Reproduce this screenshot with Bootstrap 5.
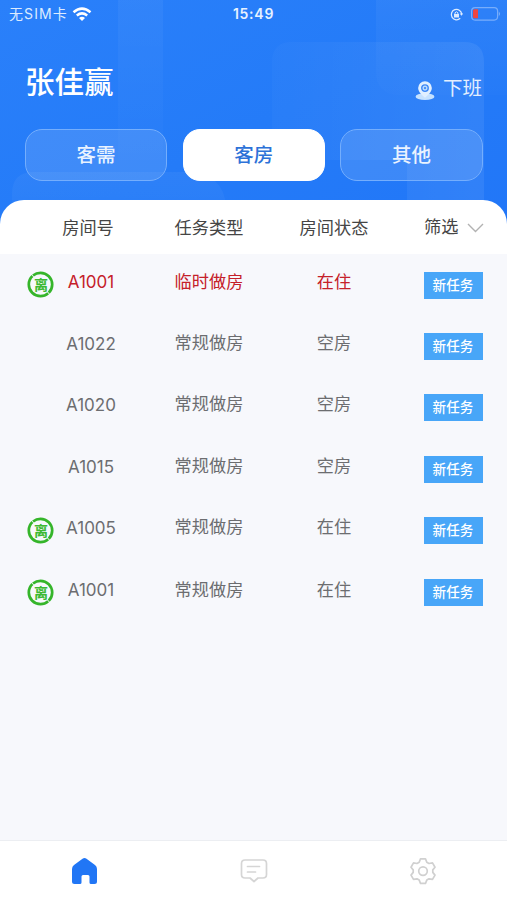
<!DOCTYPE html>
<html lang="zh-CN">
<head>
<meta charset="utf-8">
<meta name="viewport" content="width=device-width, initial-scale=1">
<title>客房任务</title>
<link href="https://cdn.jsdelivr.net/npm/bootstrap@5.3.0/dist/css/bootstrap.min.css" rel="stylesheet">
<style>
body{font-family:"Liberation Sans","Noto Sans CJK SC",sans-serif;background:#f7f8fc;height:900px;overflow:hidden}
.hero{height:254px;background:#257af7;flex:none}
.hero-bg{inset:0}
.status-bar{height:28px;padding:0 6px 0 9px;font-size:14px;line-height:28px;color:#dcebff;grid-template-columns:1fr auto 1fr}
.clock{font-family:Inter,"Liberation Sans",sans-serif;font-weight:600;font-size:14px;letter-spacing:.75px;color:#e6f1ff;margin-left:-3px}
.sim{font-family:Inter,"Noto Sans CJK SC",sans-serif;font-size:14px;letter-spacing:1.1px}
.title-row{height:101px;padding:0 25px}
.user{font-size:29.5px;font-weight:500;line-height:40px;margin-top:35px}
.off{font-size:19.5px;line-height:28px;color:#e4efff;margin-top:46px}
.tabs{padding:0 24.5px 0 25px;gap:15.5px;height:52px}
.tab-btn{border:1px solid #74aefd;border-radius:17px;background:rgba(255,255,255,.12);color:#eaf3ff;font-size:19.5px;font-weight:500;padding:0;line-height:51px;height:52px}
.tab-btn.on{background:#fff;border-color:#fff;color:#2d72d8}
.task-grid{display:grid;grid-template-columns:27px 27px 74px 162px 88px 45.5px 59px}
.sheet-head{margin-top:19px;height:54px;background:#fff;border-radius:24px 24px 0 0;color:#454545;font-size:17.2px;line-height:57px}
.h-room{grid-column:3;margin-left:-6px}
.h-type{grid-column:4}.h-state{grid-column:5;white-space:nowrap}
.h-filter{grid-column:6/8;padding-left:46px;height:55px;white-space:nowrap}
.chevron{margin-left:9px;flex:none}
.task{height:61.4px;color:#6c6d70;font-size:17.2px;line-height:24px;padding-top:17px}
.task.urgent{color:#c5202a}
.leave{grid-column:2;margin-left:-.5px}
.num{grid-column:3;font-family:Inter,"Liberation Sans",sans-serif;font-size:17px;margin-top:-.6px}
.kind{grid-column:4;margin-top:-1.3px}
.state{grid-column:5;margin-top:-1.3px}
.tag{grid-column:7;background:#48a6f8;height:27px;line-height:28px;font-size:13.5px;font-weight:500;margin-top:.5px;letter-spacing:.2px}
.task:last-child{padding-top:18px}
.bottom-bar{height:60px;border-top:1px solid #eceef2;background:#fff}
</style>
<script src="https://cdn.jsdelivr.net/npm/bootstrap@5.3.0/dist/js/bootstrap.bundle.min.js"></script>
</head>
<body class="d-flex flex-column">
<svg class="d-none"><symbol id="leave" viewBox="0 0 27 27"><circle cx="13.5" cy="13.5" r="11.7" fill="none" stroke="#35b52a" stroke-width="2.7" stroke-dasharray="35.96 .8" stroke-dashoffset="26.8"/><text x="14" y="18.700" text-anchor="middle" font-family="Noto Sans CJK SC" font-weight="700" font-size="14" fill="#3cb932">离</text></symbol></svg>
<header class="hero position-relative">
  <svg class="hero-bg position-absolute" width="507" height="254" viewBox="0 0 507 254">
    <defs>
      <linearGradient id="g" x2="1" y2="1"><stop stop-color="#2a80fa"/><stop offset=".5" stop-color="#247bf8"/><stop offset="1" stop-color="#2176f8"/></linearGradient>
      <linearGradient id="v" x2="1" y2="0"><stop stop-color="#fff" stop-opacity=".02"/><stop offset="1" stop-color="#fff" stop-opacity=".07"/></linearGradient>
      <linearGradient id="f" x2="0" y2="1"><stop stop-color="#fff" stop-opacity=".045"/><stop offset="1" stop-color="#fff" stop-opacity=".01"/></linearGradient>
    </defs>
    <path fill="url(#g)" d="M0 0h507v254H0z"/>
    <path fill="url(#f)" d="M118 0h45v160h-45z"/>
    <path fill="url(#f)" d="M376 0h131v95H400q-24 0-24-24z"/>
    <path fill="url(#v)" d="M272 62q0-20 20-20h172q20 0 20 20v192h-77V160h-135z"/>
    <path fill="url(#f)" d="M12 254v-60q0-22 22-22h150q40 0 42 35v47z"/>
  </svg>
  <div class="position-relative">
    <div class="status-bar d-grid align-items-center">
      <div class="d-flex align-items-center"><span class="sim">无SIM卡</span>
        <svg class="ms-1" width="20" height="15" viewBox="0 0 20 15" fill="none" stroke="#fff" stroke-width="2.5"><path d="M1.5 5.2Q10-2 18.5 5.2M4.8 8.500q5.200-4.200 10.400 0"/><path d="M10 14l-3-3q3-2.300 6 0z" fill="#fff" stroke="none"/></svg></div>
      <span class="clock">15:49</span>
      <div class="d-flex align-items-center justify-content-end gap-2">
        <svg width="13" height="13" viewBox="0 0 13 13" fill="none" stroke="#dcebff" stroke-width="1.3"><path d="M10.2 10.3A5.2 5.2 0 1 1 11.700 6"/><path d="M9.700 5.500h3.500l-1.700 2.300z" fill="#dcebff" stroke="none"/><path d="M4 6h5v3.500H4z" fill="#dcebff" stroke="none"/><path d="M5 6V4.800q1.400-2 2.900 0V6" stroke-width="1"/></svg>
        <svg width="30" height="14" viewBox="0 0 30 14"><rect x=".6" y=".6" width="26" height="12.500" rx="3.500" fill="none" stroke="#78adfb" stroke-width="1.200"/><path d="M3.500 2.300h3.500v9H3.500q-1.500 0-1.500-1.500v-6q0-1.500 1.500-1.500z" fill="#ee4540"/><path d="M27.800 4.500q2.500 2.300 0 4.600z" fill="#78adfb"/></svg>
      </div>
    </div>
    <div class="title-row d-flex justify-content-between align-items-start">
      <div class="user text-white">张佳赢</div>
      <div class="off d-flex align-items-center">
        <svg class="me-2 mt-1" width="20" height="21" viewBox="0 0 21 21"><ellipse cx="10.500" cy="17" rx="9.900" ry="3.600" fill="#c6e2ff"/><path d="M10.500 18C8.500 16.500 3.300 12.500 3.300 8a7.200 7.200 0 0 1 14.400 0c0 4.500-5.200 8.500-7.200 10z" fill="#e0efff"/><circle cx="10.500" cy="8" r="3.400" fill="#b9dcff" stroke="#3d88f7" stroke-width="1.500"/><circle cx="10.500" cy="8" r="1.200" fill="#3d88f7"/></svg>下班</div>
    </div>
    <div class="tabs d-flex">
      <button class="btn tab-btn flex-fill">客需</button><button class="btn tab-btn on flex-fill">客房</button><button class="btn tab-btn flex-fill">其他</button>
    </div>
    <div class="sheet-head task-grid text-center">
      <span class="h-room">房间号</span><span class="h-type">任务类型</span><span class="h-state">房间状态</span>
      <span class="h-filter d-flex align-items-center">筛选<svg class="chevron" width="17" height="10" viewBox="0 0 17 10" fill="none" stroke="#b2b2b2" stroke-width="1.400"><path d="M1 1l7.500 7.500L16 1"/></svg></span>
    </div>
  </div>
</header>
<main class="flex-grow-1 text-center">
  <div class="task task-grid urgent"><svg class="leave" width="27" height="27"><use href="#leave"/></svg><span class="num">A1001</span><span class="kind">临时做房</span><span class="state">在住</span><span class="tag text-white">新任务</span></div>
  <div class="task task-grid"><span class="num">A1022</span><span class="kind">常规做房</span><span class="state">空房</span><span class="tag text-white">新任务</span></div>
  <div class="task task-grid"><span class="num">A1020</span><span class="kind">常规做房</span><span class="state">空房</span><span class="tag text-white">新任务</span></div>
  <div class="task task-grid"><span class="num">A1015</span><span class="kind">常规做房</span><span class="state">空房</span><span class="tag text-white">新任务</span></div>
  <div class="task task-grid"><svg class="leave" width="27" height="27"><use href="#leave"/></svg><span class="num">A1005</span><span class="kind">常规做房</span><span class="state">在住</span><span class="tag text-white">新任务</span></div>
  <div class="task task-grid"><svg class="leave" width="27" height="27"><use href="#leave"/></svg><span class="num">A1001</span><span class="kind">常规做房</span><span class="state">在住</span><span class="tag text-white">新任务</span></div>
</main>
<nav class="bottom-bar row g-0 align-items-center text-center">
  <div class="col-4"><svg width="27" height="28" viewBox="0 0 27 28"><path d="M3 8L11.500 1.700q2-1.400 4 0L24 8q2 1.500 2 4v12.500q0 2.500-2.500 2.500H20q-1.500 0-1.500-1.500V19.500q0-1.500-1.500-1.500h-5q-1.500 0-1.500 1.500v6q0 1.500-1.500 1.500H3.500Q1 27 1 24.500V12q0-2.500 2-4z" fill="#2176f5"/></svg></div>
  <div class="col-4"><svg width="28" height="26" viewBox="0 0 28 26" fill="none" stroke="#d5d5d5" stroke-width="1.700" stroke-linejoin="round" stroke-linecap="round"><path d="M5 2h18q3.500 0 3.500 3.500v11q0 3.500-3.500 3.500h-5l-4 3.500L10 20H5q-3.500 0-3.500-3.500v-11Q1.500 2 5 2zM7.500 8.500h12M7.500 14h8"/></svg></div>
  <div class="col-4"><svg width="28" height="28" viewBox="0 0 28 28" fill="none" stroke="#d0d0d0" stroke-width="1.700" stroke-linejoin="round"><path d="M11.500 1.900h5l1.300 3.300 2.200 1.300 3.500-.6 2.500 4.300-2.200 2.700v2.500l2.200 2.700-2.500 4.300-3.500-.6-2.200 1.300-1.300 3.300h-5l-1.300-3.300L8 21.800l-3.500.6L2 18.100l2.200-2.700v-2.500L2 10.200l2.500-4.300 3.500.6 2.200-1.300z"/><circle cx="14" cy="14.100" r="4.300"/></svg></div>
</nav>
</body>
</html>
